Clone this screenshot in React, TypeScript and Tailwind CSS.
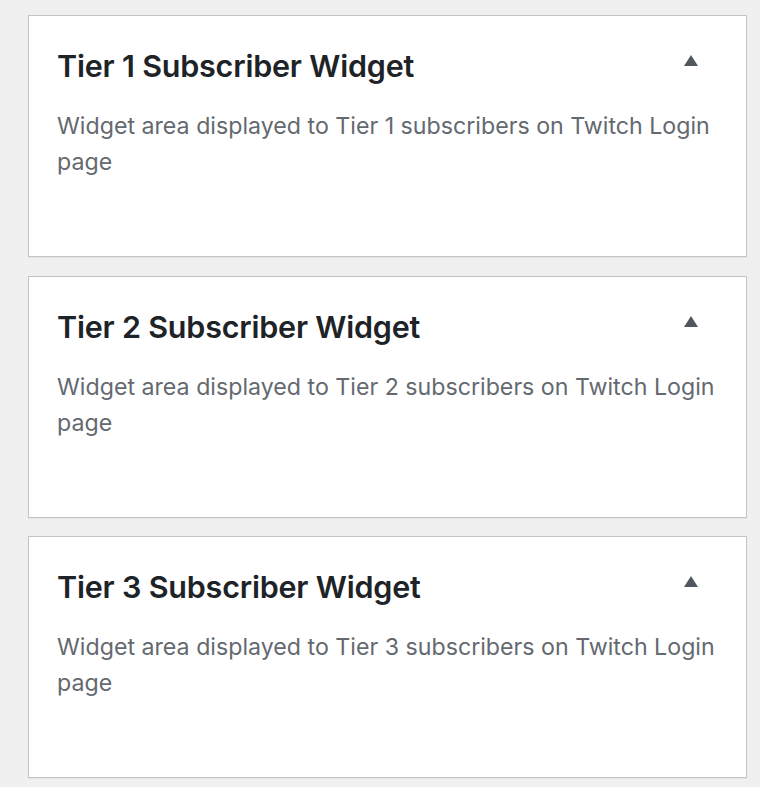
import React from "react";

const tiers = [1, 2, 3];

function Card({ n }: { n: number }) {
  const title = `Tier ${n} Subscriber Widget`;
  const desc = `Widget area displayed to Tier ${n} subscribers on Twitch Login page`;
  return (
    <div className="bg-white border border-[#c3c4c7] shadow-[0_1px_1px_rgba(0,0,0,0.04)] h-[242px] pl-[28px] pr-[20px] pt-[28px]">
      <div className="flex items-start justify-between">
        <h2 className="text-[30.5px] leading-[44px] font-semibold text-[#1d2327] tracking-[-0.2px]">
          {title}
        </h2>
        <div className="pt-[11px] pr-[28px]">
          <svg width="14" height="11" viewBox="0 0 14 11" className="block">
            <path d="M7 0 L14 11 L0 11 Z" fill="#50575e" />
          </svg>
        </div>
      </div>
      <p className="mt-[20px] text-[23.2px] leading-[36px] text-[#646970]">{desc}</p>
    </div>
  );
}

export default function App() {
  return (
    <div
      className="min-h-[787px] bg-[#f0f0f1] pl-[28px] pr-[13px] pt-[15px] flex flex-col gap-[18.5px]"
      style={{ fontFamily: "Inter, 'Noto Sans', sans-serif" }}
    >
      {tiers.map((n) => (
        <Card key={n} n={n} />
      ))}
    </div>
  );
}
